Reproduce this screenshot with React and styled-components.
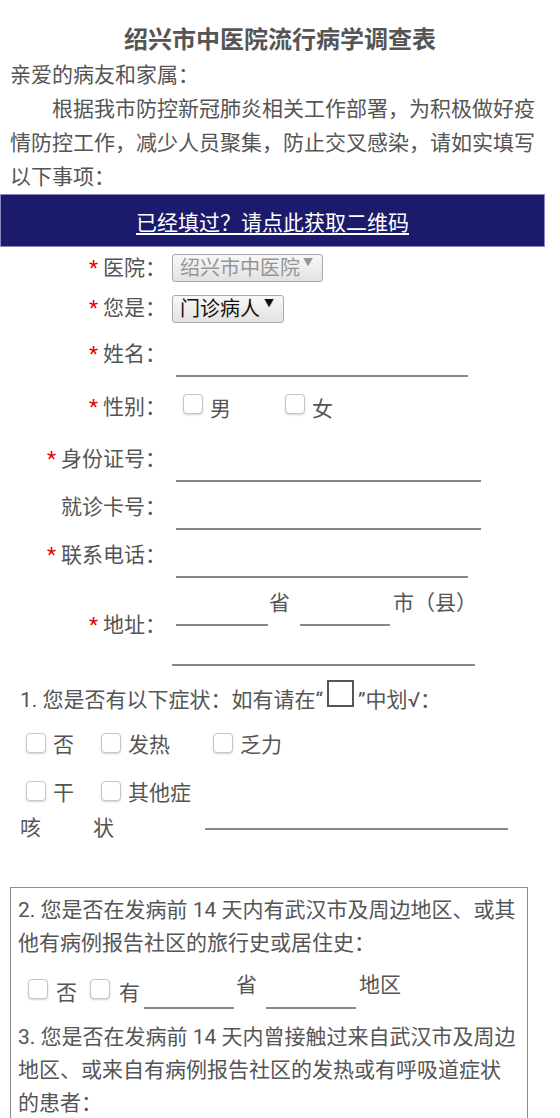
import React from 'react';
import styled, { createGlobalStyle } from 'styled-components';

const GlobalStyle = createGlobalStyle`
  * {
    box-sizing: border-box;
  }

  html,
  body {
    margin: 0;
    padding: 0;
    background: #fff;
    overflow: hidden;
  }

  body {
    font-family: Roboto, "Noto Sans CJK SC", "Noto Sans", sans-serif;
    color: #555;
  }
`;

const StyledPage = styled.div`
  width: 560px;
`;

const StyledTitle = styled.h1`
  margin: 0;
  padding-top: 22px;
  font-size: 24px;
  line-height: 36px;
  font-weight: bold;
  text-align: center;
  color: #555;
`;

const StyledIntro = styled.div`
  width: 545px;
  padding: 0 0 0 10px;
  font-size: 21px;
  line-height: 34px;

  p {
    margin: 0;
  }
`;

const StyledIndent = styled.p`
  text-indent: 2em;
`;

const StyledBar = styled.div`
  width: 545px;
  height: 53px;
  display: flex;
  align-items: center;
  justify-content: center;
  background: #1b1a6b;
  border: 1px solid #8a89c0;
`;

const StyledBarLink = styled.a`
  color: #fff;
  font-size: 21px;
  text-decoration: underline;
  text-underline-offset: 3px;
  cursor: pointer;
`;

const StyledForm = styled.form`
  padding-top: 4px;
`;

const StyledRow = styled.div`
  display: flex;
  align-items: flex-start;
  height: ${({ h }) => h}px;
`;

const StyledLabel = styled.div`
  width: 166px;
  flex: none;
  margin-top: ${({ offset }) => offset || 0}px;
  text-align: right;
  font-size: 21px;
  line-height: 34px;
  white-space: nowrap;
`;

const StyledStar = styled.span`
  color: #e40000;
  margin-right: 5px;
`;

const StyledField = styled.div`
  margin-left: 6px;
  display: flex;
  flex-direction: ${({ column }) => (column ? 'column' : 'row')};
  align-items: flex-start;
`;

const StyledSelect = styled.div`
  width: ${({ w }) => w}px;
  height: 28px;
  margin-top: ${({ top }) => top}px;
  padding: 0 9px 0 7px;
  display: flex;
  align-items: center;
  justify-content: space-between;
  border: 1px solid #a8a8a8;
  border-radius: 3px;
  background: linear-gradient(#f8f8f8, #e2e2e2);
  font-size: 20px;
  line-height: 26px;
  color: ${({ disabled }) => (disabled ? '#959595' : '#111')};
`;

const StyledCaret = styled.span`
  align-self: flex-start;
  margin-top: 2px;
  font-size: 10px;
  line-height: 12px;
`;

const StyledLine = styled.input`
  display: block;
  flex: none;
  width: ${({ w }) => w}px;
  height: ${({ h }) => h || 40}px;
  margin-left: ${({ ml }) => ml || 0}px;
  padding: 0;
  border: none;
  border-bottom: 2px solid #888;
  background: transparent;
  outline: none;
  font: inherit;
`;

const StyledText = styled.span`
  flex: none;
  margin-left: ${({ ml }) => ml || 0}px;
  margin-top: ${({ top }) => top || 0}px;
  font-size: 21px;
  line-height: 34px;
  white-space: nowrap;
`;

const StyledOption = styled.label`
  width: ${({ w }) => w}px;
  display: flex;
  align-items: flex-start;
  font-size: 21px;
  line-height: 34px;
`;

const StyledBox = styled.span`
  flex: none;
  display: inline-block;
  width: 20px;
  height: 20px;
  margin-left: ${({ ml }) => ml || 0}px;
  margin-top: ${({ top }) => top || 0}px;
  border: 1px solid #c6c6c6;
  border-radius: 4px;
  background: #fff;
  box-shadow: 0 1px 2px rgba(0, 0, 0, 0.18);
`;

const StyledInlineBox = styled(StyledBox)`
  vertical-align: -1px;
  margin-right: 7px;
`;

const StyledSymptoms = styled.div`
  margin-top: 14px;
  padding-left: 20px;
  font-size: 21px;
  line-height: 35px;
`;

const StyledQuestion = styled.div`
  white-space: nowrap;
`;

const StyledMark = styled.span`
  display: inline-block;
  width: 27px;
  height: 27px;
  margin: 0 4px;
  border: 2px solid #555;
`;

const StyledCells = styled.div`
  display: flex;
  align-items: flex-start;
  margin-top: ${({ top }) => top}px;
`;

const StyledCell = styled.div`
  flex: none;
  width: ${({ w }) => w}px;
`;

const StyledPanel = styled.div`
  width: 518px;
  margin: 41px 0 0 10px;
  padding: 6px 8px 60px 7px;
  border: 1px solid #8c8c8c;
  font-size: 21px;
  line-height: 33px;

  p {
    margin: 0;
  }
`;

const StyledChoices = styled.div`
  display: flex;
  align-items: flex-start;
  height: ${({ h }) => h}px;
`;

const lineFields = [
  { label: '身份证号：', required: true, w: 305 },
  { label: '就诊卡号：', required: false, w: 305 },
  { label: '联系电话：', required: true, w: 292 },
];

const Label = ({ children, required, offset }) => (
  <StyledLabel offset={offset}>
    {required && <StyledStar>*</StyledStar>}
    {children}
  </StyledLabel>
);

const Symptom = ({ w, ml, children }) => (
  <StyledCell w={w}>
    <StyledInlineBox ml={ml} />
    {children}
  </StyledCell>
);

const App = () => (
  <StyledPage>
    <GlobalStyle />
    <StyledTitle>绍兴市中医院流行病学调查表</StyledTitle>
    <StyledIntro>
      <p>亲爱的病友和家属：</p>
      <StyledIndent>
        根据我市防控新冠肺炎相关工作部署，为积极做好疫情防控工作，减少人员聚集，防止交叉感染，请如实填写以下事项：
      </StyledIndent>
    </StyledIntro>

    <StyledBar>
      <StyledBarLink>已经填过？请点此获取二维码</StyledBarLink>
    </StyledBar>

    <StyledForm>
      <StyledRow h={40}>
        <Label required>医院：</Label>
        <StyledField>
          <StyledSelect w={151} top={3} disabled>
            绍兴市中医院
            <StyledCaret>▼</StyledCaret>
          </StyledSelect>
        </StyledField>
      </StyledRow>

      <StyledRow h={46}>
        <Label required>您是：</Label>
        <StyledField>
          <StyledSelect w={112} top={4}>
            门诊病人
            <StyledCaret>▼</StyledCaret>
          </StyledSelect>
        </StyledField>
      </StyledRow>

      <StyledRow h={53}>
        <Label required>姓名：</Label>
        <StyledField>
          <StyledLine w={292} ml={4} />
        </StyledField>
      </StyledRow>

      <StyledRow h={52}>
        <Label required>性别：</Label>
        <StyledField>
          <StyledOption w={102}>
            <StyledBox ml={11} top={4} />
            <StyledText ml={7} top={2}>男</StyledText>
          </StyledOption>
          <StyledOption w={102}>
            <StyledBox ml={11} top={4} />
            <StyledText ml={7} top={2}>女</StyledText>
          </StyledOption>
        </StyledField>
      </StyledRow>

      {lineFields.map(({ label, required, w }) => (
        <StyledRow h={48} key={label}>
          <Label required={required}>{label}</Label>
          <StyledField>
            <StyledLine w={w} ml={4} />
          </StyledField>
        </StyledRow>
      ))}

      <StyledRow h={80}>
        <Label required offset={22}>
          地址：
        </Label>
        <StyledField column>
          <StyledChoices h={40}>
            <StyledLine w={92} ml={4} />
            <StyledText ml={1}>省</StyledText>
            <StyledLine w={90} ml={10} />
            <StyledText ml={3}>市（县）</StyledText>
          </StyledChoices>
          <StyledLine w={303} />
        </StyledField>
      </StyledRow>

      <StyledSymptoms>
        <StyledQuestion>
          1. 您是否有以下症状：如有请在“<StyledMark />”中划√：
        </StyledQuestion>
        <StyledCells top={10}>
          <Symptom w={73} ml={6}>否</Symptom>
          <Symptom w={112} ml={8}>发热</Symptom>
          <Symptom w={150} ml={8}>乏力</Symptom>
        </StyledCells>
        <StyledCells top={13}>
          <Symptom w={73} ml={6}>干咳</Symptom>
          <Symptom w={112} ml={8}>其他症状</Symptom>
          <StyledCell w={303}>
            <StyledLine w={303} h={54} />
          </StyledCell>
        </StyledCells>
      </StyledSymptoms>

      <StyledPanel>
        <p>2. 您是否在发病前 14 天内有武汉市及周边地区、或其他有病例报告社区的旅行史或居住史：</p>
        <StyledChoices h={61}>
          <StyledBox ml={10} top={19} />
          <StyledText ml={8} top={16}>否</StyledText>
          <StyledBox ml={13} top={19} />
          <StyledText ml={9} top={16}>有</StyledText>
          <StyledLine w={90} h={49} ml={4} />
          <StyledText ml={2} top={8}>省</StyledText>
          <StyledLine w={90} h={49} ml={9} />
          <StyledText ml={3} top={8}>地区</StyledText>
        </StyledChoices>
        <p>3. 您是否在发病前 14 天内曾接触过来自武汉市及周边地区、或来自有病例报告社区的发热或有呼吸道症状的患者：</p>
      </StyledPanel>
    </StyledForm>
  </StyledPage>
);

export default App;
